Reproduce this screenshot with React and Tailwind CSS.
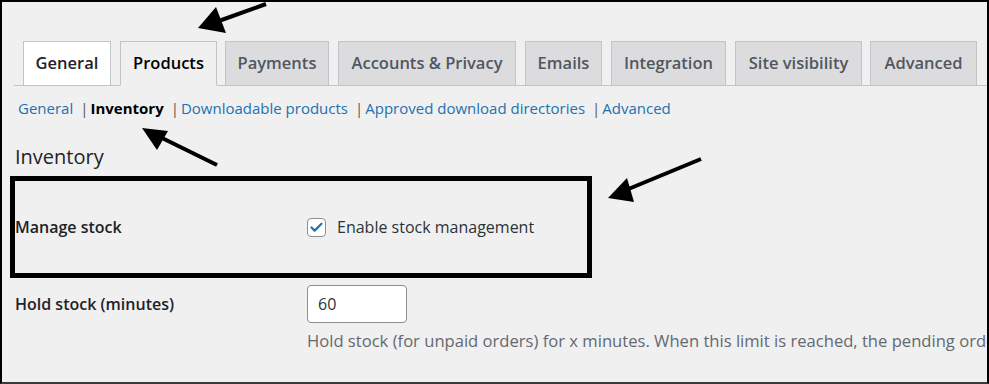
import { Check } from 'lucide-react'

const TABS = [
  { label: 'General', w: 'w-[88px]', gap: 'ml-0', state: 'white' },
  { label: 'Products', w: 'w-[97px]', gap: 'ml-[9px]', state: 'active' },
  { label: 'Payments', w: 'w-[104px]', gap: 'ml-[8px]' },
  { label: 'Accounts & Privacy', w: 'w-[178px]', gap: 'ml-[9px]' },
  { label: 'Emails', w: 'w-[77px]', gap: 'ml-[9px]' },
  { label: 'Integration', w: 'w-[115px]', gap: 'ml-[9px]' },
  { label: 'Site visibility', w: 'w-[127px]', gap: 'ml-[9px]' },
  { label: 'Advanced', w: 'w-[107px]', gap: 'ml-[8px]' },
]

const LINKS = ['General', 'Inventory', 'Downloadable products', 'Approved download directories', 'Advanced']

function Tab({ label, w, state }) {
  const look =
    state === 'white'
      ? 'bg-white text-[#1d2327] border-b-[#c3c4c7]'
      : state === 'active'
        ? 'bg-[#f0f0f0] text-black border-b-[#f0f0f0] font-bold'
        : 'bg-[#dcdcde] text-[#50575e] border-b-[#c3c4c7]'
  return (
    <div
      className={`${w} ${look} flex h-[45px] items-center justify-center border border-[#c3c4c7] text-[16.5px] font-semibold`}
    >
      {label}
    </div>
  )
}

function Arrows() {
  return (
    <svg className="pointer-events-none absolute left-[-2px] top-[-2px]" width="989" height="384">
      <line x1="266" y1="4" x2="216" y2="22" stroke="#000" strokeWidth="4" />
      <polygon points="198,28 216,7 226,33" fill="#000" />
      <line x1="217" y1="165" x2="160" y2="137" stroke="#000" strokeWidth="4" />
      <polygon points="142,128 168,131 157,150" fill="#000" />
      <line x1="701" y1="159" x2="626" y2="190" stroke="#000" strokeWidth="4" />
      <polygon points="608,198 627,178 634,202" fill="#000" />
    </svg>
  )
}

export default function App() {
  return (
    <div
      className="relative h-[384px] w-[989px] overflow-hidden border-x-2 border-t-2 border-b-2 border-black border-b-[#3a3a3a] bg-[#f0f0f0]"
      style={{ fontFamily: '"Open Sans", "Noto Sans", sans-serif' }}
    >
      <div className="ml-[12px] mt-[39px] flex border-b border-[#c3c4c7] pl-[9px]">
        {TABS.map((t) => (
          <div key={t.label} className={`-mb-px ${t.gap}`}>
            <Tab {...t} />
          </div>
        ))}
      </div>

      <div className="ml-[16px] mt-[12px] flex items-center whitespace-pre text-[15px] leading-[20px]">
        {LINKS.map((l, i) => (
          <span key={l} className="flex items-center">
            {i > 0 && <span className="ml-[7px] mr-[2px] text-[#5f534c]">|</span>}
            <span className={l === 'Inventory' ? 'font-bold text-black' : 'text-[#2271b1]'}>{l}</span>
          </span>
        ))}
      </div>

      <h2 className="ml-[13px] mt-[26px] text-[20px] font-medium leading-[26px] text-[#1d2327]">
        Inventory
      </h2>

      <div className="ml-[13px] mt-[45px] flex items-center">
        <div className="w-[292px] shrink-0 text-[16px] font-semibold text-[#1d2327]">Manage stock</div>
        <div className="flex items-center gap-[11px] text-[16px] text-[#2c3338]">
          <span className="flex h-[19px] w-[19px] items-center justify-center rounded-[4px] border border-[#8c8f94] bg-white">
            <Check size={15} strokeWidth={3.5} className="text-[#2271b1]" />
          </span>
          Enable stock management
        </div>
      </div>

      <div className="ml-[13px] mt-[46px] flex items-start">
        <div className="w-[292px] shrink-0 pt-[7px] text-[16px] font-semibold text-[#1d2327]">
          Hold stock (minutes)
        </div>
        <div className="flex min-w-0 flex-col">
          <div className="flex h-[38px] w-[100px] items-center rounded-[4px] border border-[#8c8f94] bg-white px-[10px] text-[16px] text-[#2c3338]">
            60
          </div>
          <div className="mt-[6px] whitespace-nowrap text-[16.6px] text-[#646970]">
            Hold stock (for unpaid orders) for x minutes. When this limit is reached, the pending order will be cancelled.
          </div>
        </div>
      </div>

      <div className="pointer-events-none absolute left-[8px] top-[174px] h-[102px] w-[582px] border-[5px] border-black" />
      <Arrows />
    </div>
  )
}
